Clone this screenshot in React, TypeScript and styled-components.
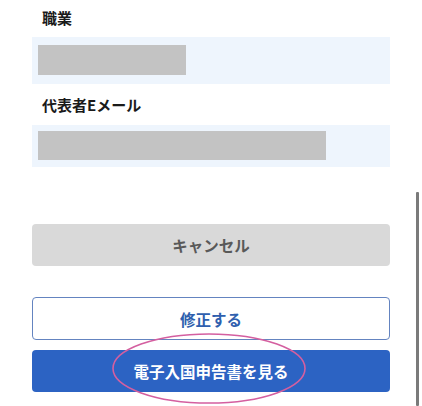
import React from "react";
import styled, { createGlobalStyle } from "styled-components";

const Global = createGlobalStyle`
  html, body { margin: 0; padding: 0; background: #ffffff; }
  body { font-family: "Noto Sans CJK JP", "Noto Sans", sans-serif; }
`;

const Page = styled.div`
  position: relative;
  width: 422px;
  height: 406px;
  overflow: hidden;
  background: #fff;
`;

const Form = styled.div`
  display: flex;
  flex-direction: column;
  margin-left: 32px;
  width: 358px;
`;

const Label = styled.div<{ $top: number; $bottom: number }>`
  padding: ${(p) => p.$top}px 10px ${(p) => p.$bottom}px;
  font-size: 15px;
  line-height: 22px;
  font-weight: 700;
  color: #1a1a1a;
`;

const Field = styled.div<{ $h: number; $pt: number }>`
  box-sizing: border-box;
  height: ${(p) => p.$h}px;
  padding: ${(p) => p.$pt}px 6px 0;
  background: #eef5fd;
`;

const Mask = styled.div<{ $w: number; $h: number }>`
  width: ${(p) => p.$w}px;
  height: ${(p) => p.$h}px;
  background: #c3c3c3;
`;

const Actions = styled.div`
  display: flex;
  flex-direction: column;
  margin-top: 57px;
`;

const Button = styled.div<{ $variant: "cancel" | "outline" | "primary"; $mt: number; $h: number }>`
  box-sizing: border-box;
  height: ${(p) => p.$h}px;
  margin-top: ${(p) => p.$mt}px;
  display: flex;
  align-items: center;
  justify-content: center;
  border-radius: 4px;
  font-size: 15.5px;
  font-weight: 700;
  ${(p) =>
    p.$variant === "cancel"
      ? `background: #d9d9d9; color: #595959;`
      : p.$variant === "outline"
      ? `background: #ffffff; color: #2f5fae; border: 1.5px solid #6484c0;`
      : `background: #2c63c3; color: #ffffff;`}
`;

const Scrollbar = styled.div`
  position: absolute;
  left: 416px;
  top: 192px;
  width: 3px;
  height: 214px;
  background: #7a7a7a;
  border-radius: 1px;
`;

const Annotation = styled.svg`
  position: absolute;
  left: 0;
  top: 0;
  pointer-events: none;
`;

export default function App() {
  return (
    <Page>
      <Global />
      <Form>
        <Label $top={7} $bottom={8}>職業</Label>
        <Field $h={47} $pt={8}>
          <Mask $w={148} $h={30} />
        </Field>
        <Label $top={10} $bottom={9}>代表者Eメール</Label>
        <Field $h={42} $pt={6}>
          <Mask $w={288} $h={29} />
        </Field>
        <Actions>
          <Button $variant="cancel" $mt={0} $h={42}>キャンセル</Button>
          <Button $variant="outline" $mt={31} $h={43}>修正する</Button>
          <Button $variant="primary" $mt={10} $h={42}>電子入国申告書を見る</Button>
        </Actions>
      </Form>
      <Scrollbar />
      <Annotation width={422} height={406} viewBox="0 0 422 406">
        <ellipse cx={209} cy={368.5} rx={96} ry={34.5} fill="none" stroke="#d45fa0" strokeWidth={1.6} />
      </Annotation>
    </Page>
  );
}
